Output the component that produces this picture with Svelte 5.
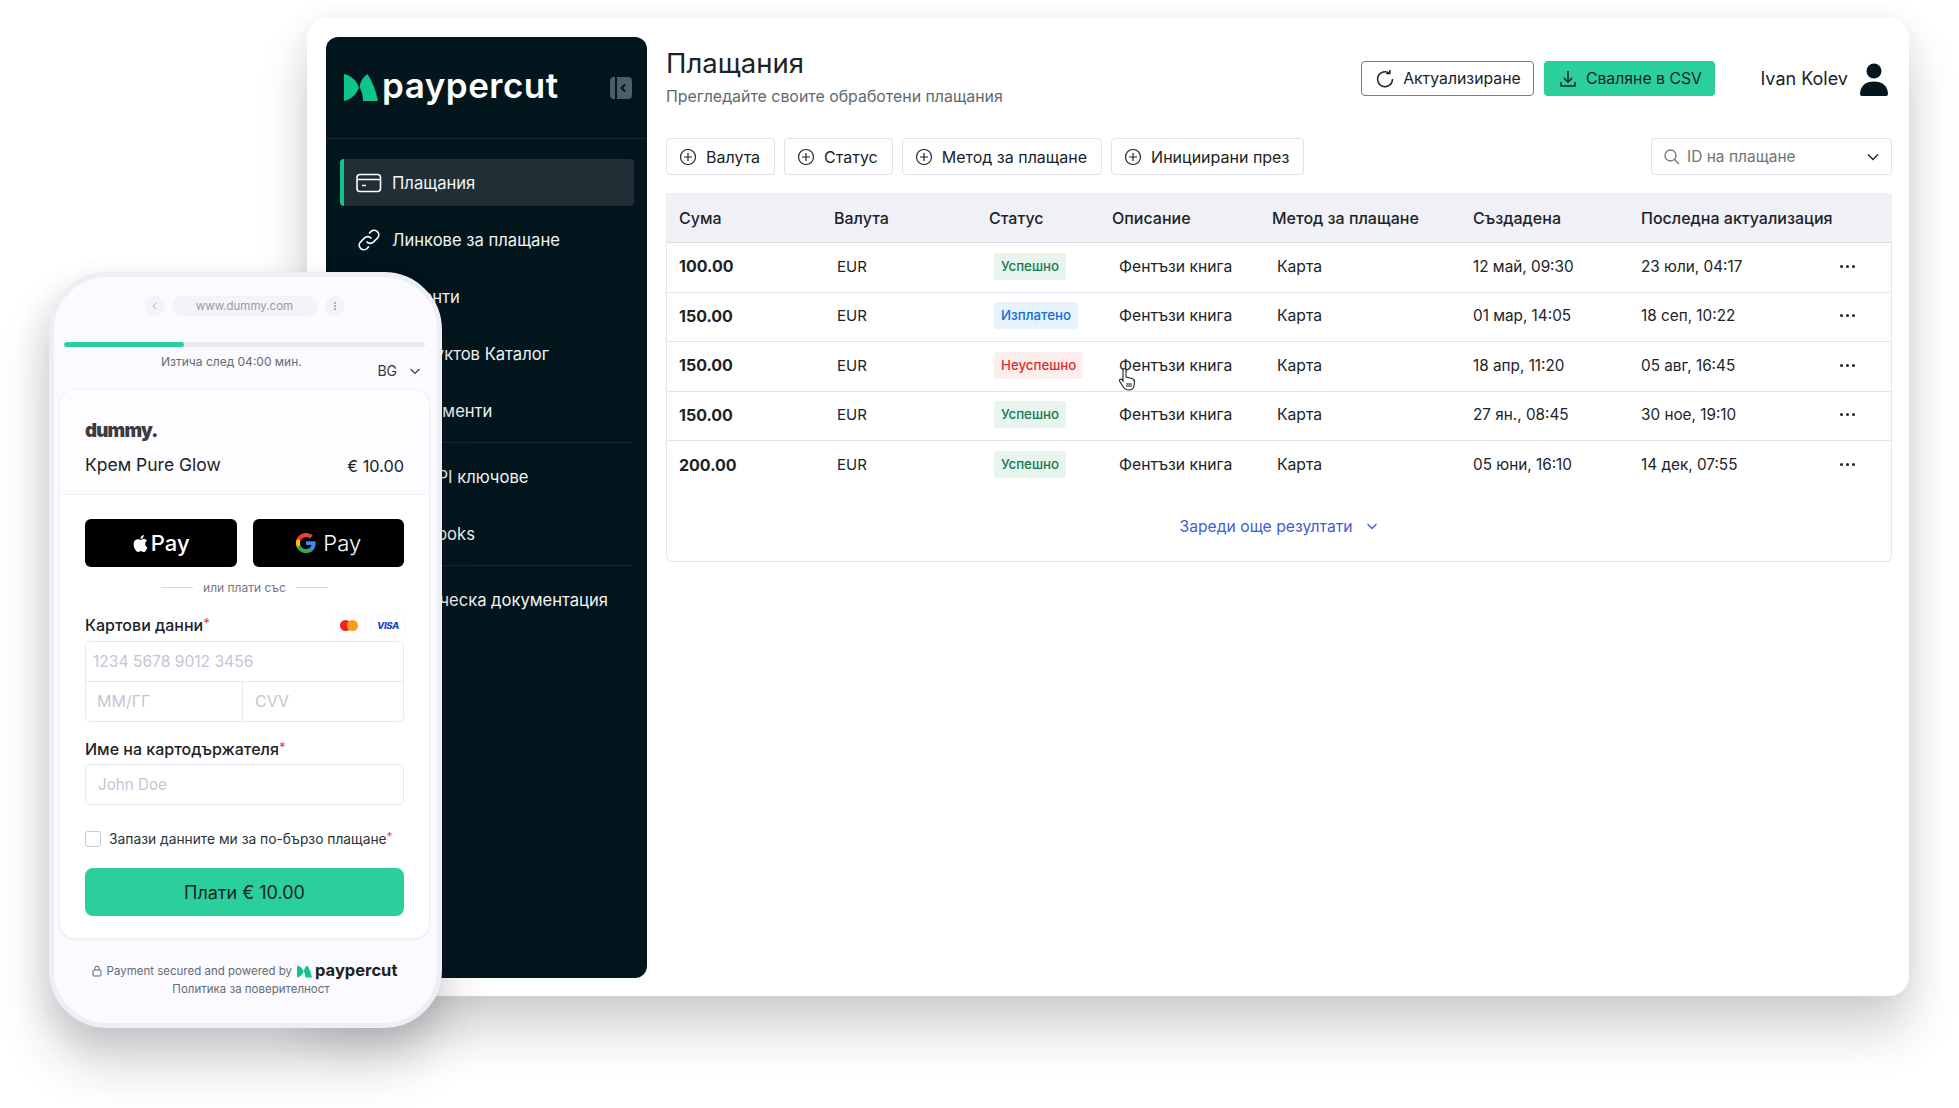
<script>
    const navTop = [
        { label: "Плащания", icon: "card", active: true },
        { label: "Линкове за плащане", icon: "link" },
        { label: "Клиенти" },
        { label: "Продуктов Каталог" },
        { label: "Абонаменти" },
    ];
    const navMid = [{ label: "Тип API ключове" }, { label: "Webhooks" }];
    const navEnd = [{ label: "Техническа документация" }];

    const filters = ["Валута", "Статус", "Метод за плащане", "Инициирани през"];

    const rows = [
        { amount: "100.00", status: "ok", statusText: "Успешно", created: "12 май, 09:30", updated: "23 юли, 04:17" },
        { amount: "150.00", status: "paid", statusText: "Изплатено", created: "01 мар, 14:05", updated: "18 сеп, 10:22" },
        { amount: "150.00", status: "fail", statusText: "Неуспешно", created: "18 апр, 11:20", updated: "05 авг, 16:45" },
        { amount: "150.00", status: "ok", statusText: "Успешно", created: "27 ян., 08:45", updated: "30 ное, 19:10" },
        { amount: "200.00", status: "ok", statusText: "Успешно", created: "05 юни, 16:10", updated: "14 дек, 07:55" },
    ];
</script>

{#snippet mark(cls)}
    <svg class={cls} viewBox="0 0 34 27">
        <path d="M0 0C7 1.500 12.500 6.500 15 13.500C12.500 20.500 7 25.500 0 27Z" fill="#0fc68a" />
        <path d="M23.500 0C18.500 3.500 15.700 8.500 15.800 13.500C18 18 19.200 22.500 19 27H34C32 17 28.500 7.500 23.500 0Z" fill="#0fc68a" />
    </svg>
{/snippet}

{#snippet navItem(item)}
    <div class="nav-item" class:active={item.active}>
        <span class="nav-icon">
            {#if item.icon === "card"}
                <svg viewBox="0 0 26 20" width="26" height="20" fill="none" stroke="#fff" stroke-width="1.600">
                    <rect x="1" y="1.500" width="23.500" height="17" rx="3" />
                    <path d="M1 6.500H24.500M6 12.500H10" />
                </svg>
            {:else if item.icon === "link"}
                <svg viewBox="0 0 24 24" width="24" height="24" fill="none" stroke="#fff" stroke-width="1.700" stroke-linecap="round">
                    <path d="M10 14a4.500 4.500 0 0 0 6.500 0l4-4a4.600 4.600 0 0 0-6.500-6.500l-1.500 1.500" />
                    <path d="M14 10a4.500 4.500 0 0 0-6.500 0l-4 4a4.600 4.600 0 0 0 6.500 6.500l1.500-1.500" />
                </svg>
            {/if}
        </span>
        <span>{item.label}</span>
    </div>
{/snippet}

<div class="stage">
    <div class="window">
        <aside class="sidebar">
            <div class="brand">
                {@render mark("brand-mark")}
                <span class="brand-name">paypercut</span>
                <span class="collapse">
                    <svg viewBox="0 0 22 22" width="22" height="22">
                        <rect width="22" height="22" rx="4" fill="#4b5f69" />
                        <rect x="5" width="2" height="22" fill="#04161d" />
                        <path d="M15 7.500L11.500 11L15 14.500" fill="none" stroke="#04161d" stroke-width="2" />
                    </svg>
                </span>
            </div>
            <nav class="nav">
                <div class="nav-group first">
                    {#each navTop as item}
                        {@render navItem(item)}
                    {/each}
                </div>
                <div class="nav-group">
                    {#each navMid as item}
                        {@render navItem(item)}
                    {/each}
                </div>
                <div class="nav-group">
                    {#each navEnd as item}
                        {@render navItem(item)}
                    {/each}
                </div>
            </nav>
        </aside>

        <main class="main">
            <header class="top">
                <div class="heading">
                    <h1>Плащания</h1>
                    <p>Прегледайте своите обработени плащания</p>
                </div>
                <div class="actions">
                    <button class="btn outline">
                        <svg viewBox="0 0 20 20" width="20" height="20" fill="none" stroke="#1b2327" stroke-width="1.500">
                            <path d="M14.500 4.200A7.500 7.500 0 1 0 17.500 10" />
                            <path d="M14.800 1v3.600h-3.600" />
                        </svg>
                        Актуализиране
                    </button>
                    <button class="btn green">
                        <svg viewBox="0 0 20 20" width="20" height="20" fill="none" stroke="#1b2327" stroke-width="1.500">
                            <path d="M10 2v11M5.800 9L10 13.200L14.200 9M3 13v4h14v-4" />
                        </svg>
                        Сваляне в CSV
                    </button>
                    <div class="user">
                        <span>Ivan Kolev</span>
                        <svg viewBox="0 0 28 34" width="28" height="34" fill="#04161d">
                            <circle cx="14" cy="9" r="7.500" />
                            <path d="M0 32C0 24 6 19.500 14 19.500S28 24 28 32C28 33 27 34 26 34H2C1 34 0 33 0 32Z" />
                        </svg>
                    </div>
                </div>
            </header>

            <div class="toolbar">
                <div class="filters">
                    {#each filters as f}
                        <button class="chip">
                            <svg viewBox="0 0 18 18" width="18" height="18" fill="none" stroke="#1b2327" stroke-width="1.200">
                                <circle cx="9" cy="9" r="7.500" />
                                <path d="M9 5v8M5 9h8" />
                            </svg>
                            {f}
                        </button>
                    {/each}
                </div>
                <div class="search">
                    <svg viewBox="0 0 18 18" width="18" height="18" fill="none" stroke="#6d7578" stroke-width="1.300">
                        <circle cx="7.500" cy="7.500" r="5.500" />
                        <path d="M11.500 11.500L16 16" />
                    </svg>
                    <span class="search-text">ID на плащане</span>
                    <svg viewBox="0 0 14 14" width="14" height="14" fill="none" stroke="#1b2327" stroke-width="1.400">
                        <path d="M2 4.500L7 9.500L12 4.500" />
                    </svg>
                </div>
            </div>

            <div class="table">
                <div class="row head">
                    <span>Сума</span>
                    <span>Валута</span>
                    <span>Статус</span>
                    <span>Описание</span>
                    <span>Метод за плащане</span>
                    <span>Създадена</span>
                    <span>Последна актуализация</span>
                </div>
                {#each rows as r}
                    <div class="row body">
                        <span class="amount">{r.amount}</span>
                        <span class="cur">EUR</span>
                        <span class="stat"><b class="badge {r.status}">{r.statusText}</b></span>
                        <span class="desc">Фентъзи книга</span>
                        <span class="meth">Карта</span>
                        <span class="date">{r.created}</span>
                        <span class="date">{r.updated}</span>
                        <span class="dots"><i></i><i></i><i></i></span>
                    </div>
                {/each}
                <div class="more">
                    Зареди още резултати
                    <svg viewBox="0 0 14 14" width="14" height="14" fill="none" stroke="#3f5bd8" stroke-width="1.300">
                        <path d="M2.500 5L7 9.500L11.500 5" />
                    </svg>
                </div>
            </div>
        </main>

        <svg class="cursor" viewBox="0 0 18 24" width="18" height="24">
            <path d="M5 3C5 1 8 1 8 3V10L14 11.500C16 12 16.500 13 16.500 15L16 19C15.500 22 14 23 11 23C8 23 6.500 22 5 19.500L1.500 14C1 12.500 3 11.500 4 12.500L5 14Z" fill="#fff" stroke="#1b2327" stroke-width="1.100" />
            <path d="M9 16V20M11 16V20M13 16V20" stroke="#1b2327" stroke-width="1" />
        </svg>
    </div>

    <div class="phone">
        <div class="urlbar">
            <span class="round">
                <svg viewBox="0 0 10 10" width="10" height="10" fill="none" stroke="#b3b3bd" stroke-width="1"><path d="M6.500 1.500L3 5L6.500 8.500" /></svg>
            </span>
            <span class="pill">www.dummy.com</span>
            <span class="round kebab"><i></i><i></i><i></i></span>
        </div>
        <div class="progress"><div class="progress-fill" style="width: 33.2%"></div></div>
        <div class="expiry">
            <span>Изтича след 04:00 мин.</span>
            <span class="lang">
                BG
                <svg viewBox="0 0 12 12" width="12" height="12" fill="none" stroke="#333b40" stroke-width="1.100"><path d="M1.500 4L6 8.500L10.500 4" /></svg>
            </span>
        </div>

        <div class="pay-card">
            <div class="merchant">
                <div class="dummy">dummy.</div>
                <div class="product">
                    <span>Крем Pure Glow</span>
                    <span class="price">€ 10.00</span>
                </div>
            </div>
            <div class="pay-body">
                <div class="wallets">
                    <div class="wallet">
                        <svg class="apple" viewBox="0 0 24 24" width="17" height="17" fill="#fff">
                            <path d="M12.152 6.896c-.948 0-2.415-1.078-3.960-1.040-2.040.027-3.910 1.183-4.961 3.014-2.117 3.675-.546 9.103 1.519 12.090 1.013 1.454 2.208 3.090 3.792 3.039 1.520-.065 2.090-.987 3.935-.987 1.831 0 2.350.987 3.960.948 1.637-.026 2.676-1.480 3.676-2.948 1.156-1.688 1.636-3.325 1.662-3.415-.039-.013-3.182-1.221-3.220-4.857-.026-3.040 2.480-4.494 2.597-4.559-1.429-2.090-3.623-2.324-4.390-2.376-2-.156-3.675 1.090-4.610 1.090zM15.530 3.830c.843-1.012 1.400-2.427 1.245-3.830-1.207.052-2.662.805-3.532 1.818-.780.896-1.454 2.338-1.273 3.714 1.338.104 2.715-.688 3.559-1.701" />
                        </svg>
                        <span class="apay">Pay</span>
                    </div>
                    <div class="wallet">
                        <svg viewBox="0 0 24 24" width="22" height="22">
                            <path fill="#4285f4" d="M22.560 12.250c0-.780-.070-1.530-.200-2.250H12v4.260h5.920c-.260 1.370-1.040 2.530-2.210 3.310v2.770h3.570c2.080-1.920 3.280-4.740 3.280-8.090z" />
                            <path fill="#34a853" d="M12 23c2.970 0 5.460-.980 7.280-2.660l-3.570-2.770c-.980.660-2.230 1.060-3.710 1.060-2.860 0-5.290-1.930-6.160-4.530H2.180v2.840C3.990 20.530 7.700 23 12 23z" />
                            <path fill="#fbbc05" d="M5.840 14.090c-.220-.660-.350-1.360-.350-2.090s.130-1.430.350-2.090V7.070H2.180C1.430 8.550 1 10.220 1 12s.430 3.450 1.180 4.930l2.850-2.220.810-.620z" />
                            <path fill="#ea4335" d="M12 5.380c1.620 0 3.060.560 4.210 1.640l3.150-3.150C17.450 2.090 14.970 1 12 1 7.700 1 3.990 3.470 2.180 7.070l3.660 2.840c.870-2.600 3.300-4.530 6.160-4.530z" />
                        </svg>
                        <span class="gpay">Pay</span>
                    </div>
                </div>
                <div class="or"><i></i><span>или плати със</span><i></i></div>

                <div class="label-row">
                    <label for="card-no">Картови данни<em>*</em></label>
                    <div class="brands">
                        <span class="brand-tile mc"><i></i><i></i></span>
                        <span class="brand-tile visa">VISA</span>
                    </div>
                </div>
                <div class="field-group">
                    <div class="ph ph-num">1234 5678 9012 3456</div>
                    <div class="split">
                        <div class="ph ph-mm">ММ/ГГ</div>
                        <div class="ph ph-cvv">CVV</div>
                    </div>
                </div>

                <div class="label-row second">
                    <label for="holder">Име на картодържателя<em>*</em></label>
                </div>
                <div class="field ph">John Doe</div>

                <div class="remember">
                    <span class="check"></span>
                    <span>Запази данните ми за по-бързо плащане<em>*</em></span>
                </div>

                <button class="pay-btn">Плати € 10.00</button>
            </div>
        </div>

        <div class="secured">
            <div class="secured-line">
                <svg viewBox="0 0 10 12" width="10" height="12" fill="none" stroke="#5b5f78" stroke-width="1">
                    <rect x="1" y="5" width="8" height="6" rx="1" />
                    <path d="M2.800 5V3.300a2.200 2.200 0 0 1 4.400 0V5" />
                </svg>
                <span>Payment secured and powered by</span>
                {@render mark("mini-mark")}
                <span class="mini-name">paypercut</span>
            </div>
            <div class="policy">Политика за поверителност</div>
        </div>
    </div>
</div>

<style>
    :global(body) {
        background: #fff;
    }
    .stage {
        position: relative;
        width: 1959px;
        height: 1108px;
        overflow: hidden;
        font-family: Inter, "Noto Sans", sans-serif;
        color: #1b2327;
    }
    button {
        font-family: inherit;
    }

    /* free canvas: the app window and the phone overlap */
    .window {
        position: absolute;
        left: 307px;
        top: 18px;
        width: 1602px;
        height: 978px;
        box-sizing: border-box;
        display: flex;
        gap: 19px;
        padding: 19px 17px 18px 19px;
        background: #fff;
        border-radius: 20px;
        box-shadow: 0 34px 50px rgba(30, 30, 40, 0.2), 0 0 30px rgba(30, 30, 40, 0.06);
    }
    .sidebar {
        width: 321px;
        flex-shrink: 0;
        background: #04161d;
        border-radius: 12px;
        color: #fff;
    }
    .brand {
        display: flex;
        align-items: center;
        height: 101px;
        padding: 0 15px 0 18px;
        border-bottom: 1px solid #17282f;
    }
    :global(.brand-mark) {
        width: 34px;
        height: 27px;
        flex-shrink: 0;
    }
    .brand-name {
        font-size: 35px;
        font-weight: 600;
        letter-spacing: 0.5px;
        margin-left: 4px;
        line-height: 1;
        padding-bottom: 5px;
    }
    .collapse {
        margin-left: auto;
        display: flex;
    }
    .nav {
        padding: 20px 13px 0 14px;
    }
    .nav-group {
        border-top: 1px solid #17282f;
        padding: 10px 0 8px;
    }
    .nav-group.first {
        border-top: 0;
        padding: 0 0 8px;
    }
    .nav-item {
        display: flex;
        align-items: center;
        height: 47px;
        margin-bottom: 10px;
        padding-left: 16px;
        font-size: 16.600px;
        color: #f2f4f5;
    }
    .nav-group .nav-item:last-child {
        margin-bottom: 0;
    }
    .nav-item.active {
        background: #222e35;
        border-left: 4px solid #0fc68a;
        border-radius: 4px;
        padding-left: 12px;
    }
    .nav-icon {
        width: 26px;
        height: 24px;
        margin-right: 10px;
        display: flex;
        align-items: center;
        justify-content: center;
        flex-shrink: 0;
    }

    .main {
        flex: 1;
        min-width: 0;
        display: flex;
        flex-direction: column;
    }
    .top {
        display: flex;
        justify-content: space-between;
        height: 101px;
    }
    h1 {
        margin: 9px 0 0;
        font-size: 27.500px;
        font-weight: 400;
        line-height: 34px;
    }
    .heading p {
        margin: 8px 0 0;
        font-size: 15.900px;
        line-height: 18px;
        color: #5c6b70;
    }
    .actions {
        display: flex;
        align-items: flex-start;
        gap: 10px;
        padding: 24px 4px 0 0;
    }
    .btn {
        display: flex;
        align-items: center;
        justify-content: center;
        gap: 8px;
        height: 35px;
        font-size: 15.800px;
        color: #1b2327;
        border-radius: 4px;
        padding: 0;
    }
    .btn.outline {
        width: 173px;
        background: #fff;
        border: 1px solid #77797d;
    }
    .btn.green {
        width: 171px;
        background: #2acf9c;
        border: 0;
    }
    .user {
        display: flex;
        align-items: center;
        gap: 12px;
        margin-left: 35px;
        font-size: 18px;
        height: 35px;
    }
    .toolbar {
        display: flex;
        justify-content: space-between;
        height: 37px;
    }
    .filters {
        display: flex;
        gap: 9px;
    }
    .chip {
        display: flex;
        align-items: center;
        gap: 9px;
        height: 37px;
        padding: 0 14px 0 12px;
        background: #fff;
        border: 1px solid #e0e1e8;
        border-radius: 4px;
        font-size: 16px;
        color: #1b2327;
    }
    .search {
        width: 241px;
        box-sizing: border-box;
        display: flex;
        align-items: center;
        padding: 0 11px;
        gap: 6px;
        border: 1px solid #e0e1e8;
        border-radius: 4px;
    }
    .search-text {
        flex: 1;
        font-size: 15.500px;
        color: #6d7578;
    }
    .table {
        margin-top: 18px;
        height: 369px;
        box-sizing: border-box;
        border: 1px solid #e6e7ee;
        border-top: 0;
        border-radius: 0 0 6px 6px;
    }
    .row {
        display: grid;
        grid-template-columns: 155px 155px 123px 160px 201px 168px 199px 1fr;
        align-items: center;
        padding-left: 12px;
        font-size: 15.700px;
        border-bottom: 1px solid #e3e4ea;
        height: 49.500px;
        box-sizing: border-box;
    }
    .row.head {
        height: 50px;
        margin: 0 -1px;
        padding-left: 13px;
        background: #f0f1f6;
        border-bottom: 1px solid #dcdde6;
        font-size: 16px;
        font-weight: 500;
    }
    .row.body:nth-child(6) {
        border-bottom: 0;
    }
    .row.body {
        padding-bottom: 2px;
    }
    .amount {
        font-weight: 700;
        font-size: 16px;
    }
    .cur {
        padding-left: 3px;
        font-size: 15px;
    }
    .stat {
        padding-left: 5px;
    }
    .desc {
        padding-left: 7px;
    }
    .meth {
        padding-left: 5px;
    }
    .date {
        font-size: 15.300px;
    }
    .badge {
        display: inline-block;
        font-weight: 500;
        font-size: 13.300px;
        line-height: 27px;
        padding: 0 7px;
        border-radius: 3px;
    }
    .badge.ok {
        background: #e8f4ee;
        color: #177a52;
    }
    .badge.paid {
        background: #e7f2fd;
        color: #0f6fd8;
    }
    .badge.fail {
        background: #fdeeee;
        color: #e02d2d;
    }
    .dots {
        display: flex;
        gap: 3px;
    }
    .dots i {
        width: 3px;
        height: 3px;
        border-radius: 50%;
        background: #1b2327;
    }
    .more {
        display: flex;
        align-items: center;
        justify-content: center;
        gap: 12px;
        margin-top: 26px;
        font-size: 15.700px;
        color: #3f5bd8;
    }
    .cursor {
        position: absolute;
        left: 811px;
        top: 349px;
    }

    .phone {
        position: absolute;
        left: 49px;
        top: 272px;
        width: 393px;
        height: 756px;
        box-sizing: border-box;
        padding: 0 7px 0 5px;
        background: #fafaff;
        border: 5px solid #eeeef5;
        border-radius: 58px;
        box-shadow: 0 34px 50px rgba(30, 30, 40, 0.22), -8px 10px 30px rgba(30, 30, 40, 0.07);
        display: flex;
        flex-direction: column;
    }
    .urlbar {
        display: flex;
        align-items: center;
        justify-content: center;
        gap: 7px;
        height: 20px;
        margin-top: 19px;
    }
    .round {
        width: 20px;
        height: 20px;
        border-radius: 50%;
        background: #f3f3f8;
        display: flex;
        align-items: center;
        justify-content: center;
    }
    .kebab {
        flex-direction: column;
        gap: 1px;
    }
    .kebab i {
        width: 2px;
        height: 2px;
        background: #9a9aa6;
        border-radius: 50%;
    }
    .pill {
        width: 146px;
        height: 20px;
        line-height: 20px;
        text-align: center;
        border-radius: 10px;
        background: #f3f3f8;
        font-size: 11.500px;
        color: #9a9aa6;
    }
    .progress {
        height: 5px;
        margin: 26px 5px 0;
        border-radius: 3px;
        background: #eaeaf2;
        overflow: hidden;
    }
    .progress-fill {
        height: 100%;
        background: #2acf9c;
        border-radius: 3px;
    }
    .expiry {
        display: flex;
        justify-content: space-between;
        align-items: flex-start;
        height: 35px;
        padding: 7px 9px 0 102px;
        font-size: 12px;
        line-height: 16px;
        color: #676a74;
    }
    .lang {
        display: flex;
        align-items: center;
        gap: 12px;
        margin-top: 9px;
        font-size: 14px;
        color: #333b40;
    }
    .pay-card {
        height: 550px;
        flex-shrink: 0;
        box-sizing: border-box;
        background: #fff;
        border: 1px solid #f1f1f6;
        border-radius: 16px;
        box-shadow: 0 1px 2px rgba(30, 30, 60, 0.08);
    }
    .merchant {
        height: 105px;
        box-sizing: border-box;
        padding: 29px 25px 0 25px;
        background: #fdfcff;
        border-bottom: 1px solid #f3f3f7;
        border-radius: 16px 16px 0 0;
    }
    .dummy {
        font-size: 18.700px;
        font-weight: 900;
        letter-spacing: -0.8px;
        line-height: 24px;
        color: #3b3b40;
    }
    .product {
        display: flex;
        justify-content: space-between;
        align-items: center;
        margin-top: 9px;
        font-size: 17.500px;
        line-height: 22px;
    }
    .price {
        font-size: 16.300px;
        padding-top: 3px;
    }
    .pay-body {
        padding: 24px 25px 0 25px;
    }
    .wallets {
        display: flex;
        gap: 16px;
    }
    .wallet {
        flex: 1;
        height: 48px;
        background: #000;
        border-radius: 6px;
        color: #fff;
        display: flex;
        align-items: center;
        justify-content: center;
        gap: 2px;
        font-size: 22px;
    }
    .apay {
        font-weight: 500;
    }
    .gpay {
        font-weight: 300;
        margin-left: 4px;
    }
    .or {
        display: flex;
        align-items: center;
        justify-content: center;
        gap: 10px;
        height: 16px;
        margin-top: 12px;
        font-size: 12px;
        color: #76767f;
    }
    .or i {
        width: 32px;
        height: 1px;
        background: #d8d8e8;
    }
    .label-row {
        display: flex;
        justify-content: space-between;
        align-items: center;
        height: 24px;
        margin-top: 18px;
    }
    .label-row.second {
        margin-top: 15px;
    }
    label {
        font-size: 16px;
        font-weight: 500;
    }
    em {
        color: #e8404f;
        font-style: normal;
        font-size: 0.8em;
        vertical-align: 3px;
    }
    .brands {
        display: flex;
        gap: 7px;
    }
    .brand-tile {
        width: 32px;
        height: 20px;
        display: flex;
        align-items: center;
        justify-content: center;
        background: #fff;
        border-radius: 4px;
        box-shadow: 0 0 3px rgba(30, 30, 60, 0.1);
    }
    .mc i {
        width: 11px;
        height: 11px;
        border-radius: 50%;
        background: #f2231c;
    }
    .mc i:last-child {
        background: #fb9a1c;
        margin-left: -4px;
    }
    .visa {
        font-size: 9.500px;
        font-weight: 800;
        font-style: italic;
        letter-spacing: -0.4px;
        color: #1c46d0;
    }
    .field-group {
        margin-top: 4px;
        border: 1px solid #e8e8f0;
        border-radius: 5px;
    }
    .ph {
        font-size: 16px;
        color: #c5c5d6;
    }
    .ph-num {
        height: 39px;
        line-height: 39px;
        padding-left: 7px;
        font-size: 15.600px;
        border-bottom: 1px solid #e8e8f0;
    }
    .split {
        display: flex;
        height: 39px;
        line-height: 39px;
    }
    .ph-mm {
        width: 157px;
        padding-left: 11px;
        box-sizing: border-box;
        border-right: 1px solid #e8e8f0;
    }
    .ph-cvv {
        padding-left: 12px;
    }
    .field {
        margin-top: 3px;
        height: 39px;
        line-height: 39px;
        padding-left: 12px;
        font-size: 15.200px;
        border: 1px solid #e8e8f0;
        border-radius: 5px;
    }
    .remember {
        display: flex;
        align-items: center;
        gap: 8px;
        margin-top: 25px;
        font-size: 13.800px;
        color: #2c3236;
    }
    .check {
        width: 16px;
        height: 16px;
        box-sizing: border-box;
        border: 1px solid #c9c9d2;
        border-radius: 3px;
    }
    .pay-btn {
        width: 100%;
        height: 48px;
        margin-top: 21px;
        background: #2acf9c;
        border: 0;
        border-radius: 8px;
        font-size: 18px;
        color: #1b2327;
    }
    .secured {
        padding-top: 23px;
        font-size: 11.500px;
        color: #676a74;
        text-align: center;
    }
    .secured-line {
        display: flex;
        align-items: center;
        justify-content: center;
        gap: 5px;
        height: 18px;
    }
    :global(.mini-mark) {
        width: 15px;
        height: 13px;
    }
    .mini-name {
        font-size: 16.500px;
        font-weight: 700;
        color: #1b2327;
        margin-left: -2px;
        padding-bottom: 3px;
    }
    .policy {
        margin-top: 2px;
        margin-left: 13px;
    }
</style>
